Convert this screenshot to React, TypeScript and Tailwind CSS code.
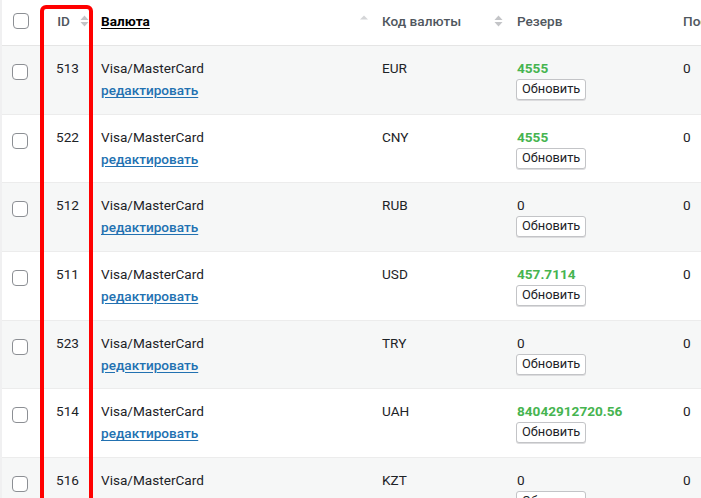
import React from 'react';

interface Row {
  id: number;
  code: string;
  reserve: string;
  green: boolean;
}

const rows: Row[] = [
  { id: 513, code: 'EUR', reserve: '4555', green: true },
  { id: 522, code: 'CNY', reserve: '4555', green: true },
  { id: 512, code: 'RUB', reserve: '0', green: false },
  { id: 511, code: 'USD', reserve: '457.7114', green: true },
  { id: 523, code: 'TRY', reserve: '0', green: false },
  { id: 514, code: 'UAH', reserve: '84042912720.56', green: true },
  { id: 516, code: 'KZT', reserve: '0', green: false },
];

const cols = 'grid grid-cols-[38px_53px_281px_135px_166px_1fr]';

function SortBoth() {
  return (
    <svg width="9" height="12" viewBox="0 0 9 12" className="shrink-0">
      <path d="M0.5 5 L4.5 0.5 L8.5 5 Z" fill="#c3c4c7" />
      <path d="M0.5 7 L4.5 11.5 L8.5 7 Z" fill="#c3c4c7" />
    </svg>
  );
}

function SortUp() {
  return (
    <svg width="8" height="5" viewBox="0 0 8 5" className="shrink-0">
      <path d="M0 4.5 L4 0.5 L8 4.5 Z" fill="#d4d5d7" />
    </svg>
  );
}

function Checkbox() {
  return <div className="w-4 h-4 rounded-[4px] border border-[#8c8f94] bg-white" />;
}

export default function App() {
  return (
    <div
      className="relative h-screen w-full overflow-hidden bg-white border-l-2 border-[#f0f0f1] text-[13.6px] text-[#1d2327]"
      style={{ fontFamily: 'Roboto, "Liberation Sans", sans-serif' }}
    >
      {/* шапка таблицы */}
      <div className={`${cols} h-[46px] border-b border-[#e5e5e5] text-[#50575e] font-medium`}>
        <div className="pl-[11px] pt-[13px]">
          <Checkbox />
        </div>
        <div className="flex items-center justify-end gap-[10px] pr-[4px] pb-[3px]">
          <span>ID</span>
          <SortBoth />
        </div>
        <div className="flex items-center justify-between pl-[8px] pr-[6px] pb-[3px]">
          <span className="font-bold text-black underline underline-offset-2">Валюта</span>
          <span className="mb-[7px]"><SortUp /></span>
        </div>
        <div className="flex items-center justify-between pl-[8px] pr-[6px] pb-[3px]">
          <span>Код валюты</span>
          <SortBoth />
        </div>
        <div className="flex items-center pl-[8px] pb-[3px]">
          <span>Резерв</span>
        </div>
        <div className="flex items-center pl-[8px] pb-[3px] whitespace-nowrap">
          <span>Поступления</span>
        </div>
      </div>

      {rows.map((r, i) => (
        <div
          key={r.id}
          className={`${cols} h-[68.67px] border-b border-[#ececec] ${i % 2 === 0 ? 'bg-[#f6f7f7]' : 'bg-white'}`}
        >
          <div className="pl-[10px] pt-[18px]">
            <Checkbox />
          </div>
          <div className="pt-[12px] pr-[14px] text-right leading-5">{r.id}</div>
          <div className="pt-[12px] pl-[8px] leading-5">
            <div>Visa/MasterCard</div>
            <a className="block mt-[2px] font-medium text-[#2271b1] underline underline-offset-2">
              редактировать
            </a>
          </div>
          <div className="pt-[12px] pl-[8px] leading-5">{r.code}</div>
          <div className="pt-[12px] pl-[7px] leading-5">
            <div className={`pl-[1px] ${r.green ? 'text-[#46b450] font-bold' : ''}`}>{r.reserve}</div>
            <button className="mt-[-2px] h-[21px] px-[5px] text-[12.8px] leading-none text-[#1d2327] bg-white border border-[#c3c4c7] rounded-[3px] shadow-[0_1px_0_#dcdcde]">
              Обновить
            </button>
          </div>
          <div className="pt-[12px] pl-[8px] leading-5">0</div>
        </div>
      ))}

      {/* выделение колонки ID */}
      <div className="absolute left-[38px] top-[5px] w-[53px] h-[520px] border-4 border-[#ff0000] rounded-t-[6px] pointer-events-none" />
    </div>
  );
}
